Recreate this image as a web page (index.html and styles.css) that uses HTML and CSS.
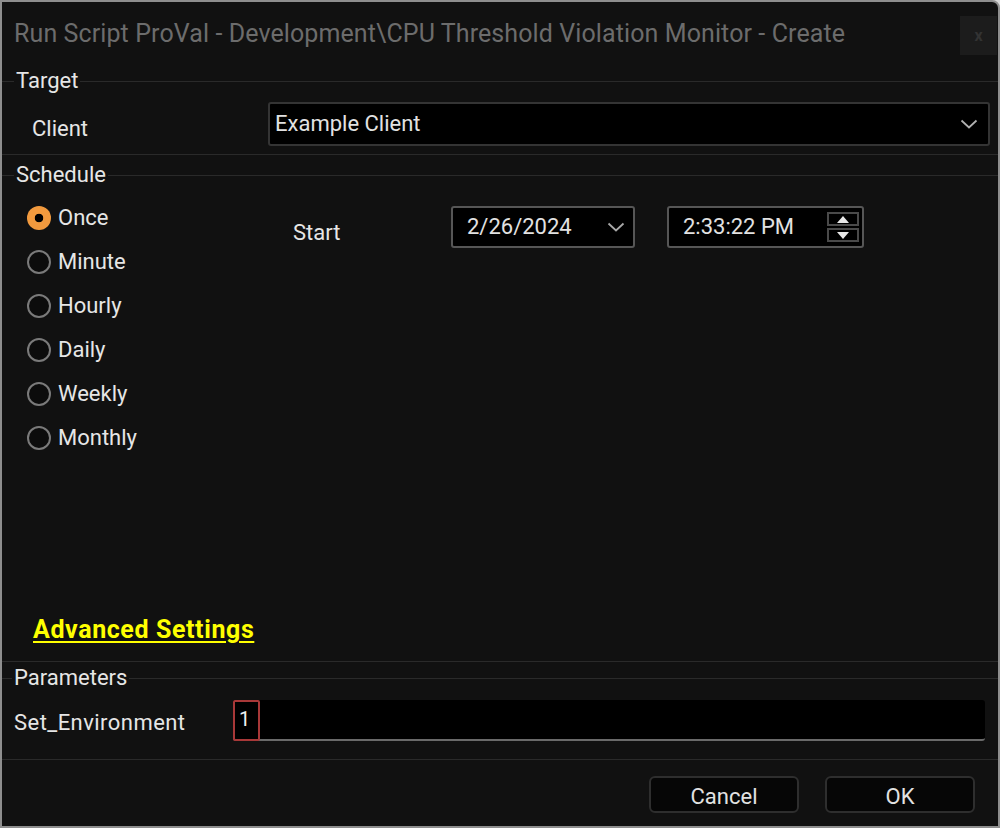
FILE: index.html
```html
<!DOCTYPE html>
<html>
<head>
<meta charset="utf-8">
<link rel="stylesheet" href="styles.css">
</head>
<body>
<div class="window">
  <div class="titlebar">
    <div class="title">Run Script ProVal - Development\CPU Threshold Violation Monitor - Create</div>
    <div class="close">x</div>
  </div>

  <fieldset class="group target">
    <legend>Target</legend>
    <div class="client-row">
      <span class="label client-label">Client</span>
      <div class="combo">
        <span class="combo-text">Example Client</span>
        <svg class="chev" width="18" height="10" viewBox="0 0 18 10"><path d="M1.5 1.5 L9 8.5 L16.5 1.5" fill="none" stroke="#b0b0b0" stroke-width="1.8"/></svg>
      </div>
    </div>
  </fieldset>

  <fieldset class="group schedule">
    <legend>Schedule</legend>
    <div class="sched-body">
      <div class="sched-top">
        <ul class="radios">
          <li><span class="radio checked"></span><span class="label">Once</span></li>
          <li><span class="radio"></span><span class="label">Minute</span></li>
          <li><span class="radio"></span><span class="label">Hourly</span></li>
          <li><span class="radio"></span><span class="label">Daily</span></li>
          <li><span class="radio"></span><span class="label">Weekly</span></li>
          <li><span class="radio"></span><span class="label">Monthly</span></li>
        </ul>
        <div class="start-row">
          <span class="label start-label">Start</span>
          <div class="datebox">
            <span class="field-text">2/26/2024</span>
            <svg class="chev" width="18" height="10" viewBox="0 0 18 10"><path d="M1.5 1.5 L9 8.5 L16.5 1.5" fill="none" stroke="#a8a8a8" stroke-width="1.8"/></svg>
          </div>
          <div class="timebox">
            <span class="field-text">2:33:22 PM</span>
            <div class="spinner">
              <div class="spin-btn"><svg width="12" height="7" viewBox="0 0 12 7"><path d="M6 0 L12 7 L0 7 Z" fill="#e8e8e8"/></svg></div>
              <div class="spin-btn"><svg width="12" height="7" viewBox="0 0 12 7"><path d="M0 0 L12 0 L6 7 Z" fill="#e8e8e8"/></svg></div>
            </div>
          </div>
        </div>
      </div>
      <a class="advanced" href="#">Advanced Settings</a>
    </div>
  </fieldset>

  <fieldset class="group params">
    <legend>Parameters</legend>
    <div class="param-row">
      <span class="label param-label">Set_Environment</span>
      <div class="param-input"><span class="cell">1</span></div>
    </div>
  </fieldset>

  <div class="buttons">
    <button class="btn">Cancel</button>
    <button class="btn">OK</button>
  </div>
</div>
</body>
</html>
```

FILE: styles.css
```css
html, body {
  margin: 0;
  padding: 0;
  background: #d8d8d8;
}

body {
  font-family: Roboto, "Noto Sans", "Liberation Sans", sans-serif;
  color: #e6e6e6;
}

.window {
  width: 1000px;
  height: 828px;
  box-sizing: border-box;
  background: #111111;
  border: 2px solid #8e8e8e;
  border-top-right-radius: 8px;
  display: flex;
  flex-direction: column;
  overflow: hidden;
}

.titlebar {
  height: 66px;
  display: flex;
  justify-content: space-between;
  align-items: flex-start;
  flex: none;
}

.title {
  padding: 17px 0 0 12px;
  font-size: 25px;
  line-height: 30px;
  letter-spacing: 0.1px;
  color: #6c6c6c;
  white-space: nowrap;
}

.close {
  margin-top: 14px;
  margin-right: 1px;
  width: 37px;
  height: 39px;
  background: #1c1c1c;
  color: #333;
  font-size: 16px;
  font-weight: bold;
  display: flex;
  align-items: center;
  justify-content: center;
}

.group {
  margin: 0;
  border: none;
  border-top: 1px solid #2a2a2a;
  border-bottom: 1px solid #2a2a2a;
  padding: 0 8px 0 12px;
  min-width: 0;
  flex: none;
}

.group legend {
  padding: 0 2px;
  font-size: 22px;
  line-height: 26px;
  color: #e6e6e6;
}

.label {
  font-size: 22px;
  line-height: 26px;
  color: #e6e6e6;
  white-space: nowrap;
}

/* Target */
.client-row {
  display: grid;
  grid-template-columns: 236px 1fr;
  align-items: center;
  padding: 8px 0 8px 18px;
}

.client-label {
  padding-top: 9px;
}

.combo {
  height: 44px;
  box-sizing: border-box;
  background: #000;
  border: 2px solid #343434;
  border-radius: 3px;
  display: flex;
  align-items: center;
  justify-content: space-between;
  padding: 0 10px 0 5px;
}

.combo-text, .field-text {
  font-size: 22px;
  line-height: 26px;
  color: #e2e2e2;
}

/* Schedule */
.schedule {
  margin-top: 7px;
}

.sched-body {
  height: 473px;
  display: flex;
  flex-direction: column;
  padding-left: 13px;
}

.sched-top {
  display: flex;
  padding-top: 8px;
}

.radios {
  list-style: none;
  margin: 0;
  padding: 0;
  width: 266px;
}

.radios li {
  height: 44px;
  display: flex;
  align-items: center;
  gap: 7px;
}

.radio {
  width: 24px;
  height: 24px;
  box-sizing: border-box;
  border-radius: 50%;
  border: 2px solid #7a7a7a;
  background: #0c0c0c;
  flex: none;
}

.radio.checked {
  border: none;
  background: radial-gradient(circle, #000 0 4px, #f29a3e 4.6px);
}

.start-row {
  display: flex;
  align-items: center;
  margin-top: 10px;
  height: 42px;
}

.start-label {
  width: 158px;
  padding-top: 12px;
}

.datebox, .timebox {
  height: 42px;
  box-sizing: border-box;
  background: #000;
  border: 2px solid #565656;
  border-radius: 3px;
  display: flex;
  align-items: center;
  justify-content: space-between;
}

.datebox {
  width: 184px;
  padding: 0 8px 0 14px;
}

.timebox {
  width: 197px;
  margin-left: 32px;
  padding: 0 3px 0 14px;
}

.spinner {
  display: flex;
  flex-direction: column;
  gap: 2px;
  width: 32px;
}

.spin-btn {
  height: 14px;
  box-sizing: border-box;
  border: 2px solid #4a4a4a;
  display: flex;
  align-items: center;
  justify-content: center;
}

.advanced {
  margin-top: auto;
  margin-bottom: 17px;
  margin-left: 6px;
  align-self: flex-start;
  font-size: 25px;
  line-height: 28px;
  letter-spacing: 0.6px;
  font-weight: bold;
  color: #ffff00;
  text-decoration: underline;
  text-decoration-thickness: 2px;
  text-underline-offset: 3px;
}

/* Parameters */
.params {
  margin-top: 3px;
  padding: 0 13px 0 10px;
}

.param-row {
  display: grid;
  grid-template-columns: 221px 1fr;
  align-items: center;
  padding: 9px 0 18px 0;
}

.param-label {
  padding-left: 2px;
  padding-top: 4px;
  letter-spacing: 0.45px;
}

.param-input {
  height: 41px;
  box-sizing: border-box;
  background: #000;
  border-bottom: 2px solid #6a6a6a;
  border-radius: 0 3px 3px 3px;
  display: flex;
}

.cell {
  width: 27px;
  height: 41px;
  box-sizing: border-box;
  border: 2px solid #a83838;
  border-radius: 2px;
  font-size: 20px;
  line-height: 34px;
  padding-left: 4px;
  color: #f0f0f0;
}

/* Buttons */
.buttons {
  display: flex;
  justify-content: flex-end;
  gap: 26px;
  padding: 16px 23px 0 0;
}

.btn {
  width: 150px;
  height: 37px;
  box-sizing: border-box;
  background: #060606;
  border: 2px solid #2e2e2e;
  border-radius: 6px;
  color: #e2e2e2;
  font-family: Roboto, "Noto Sans", "Liberation Sans", sans-serif;
  font-size: 22px;
  line-height: 26px;
  padding: 4px 0 0 0;
}
```
